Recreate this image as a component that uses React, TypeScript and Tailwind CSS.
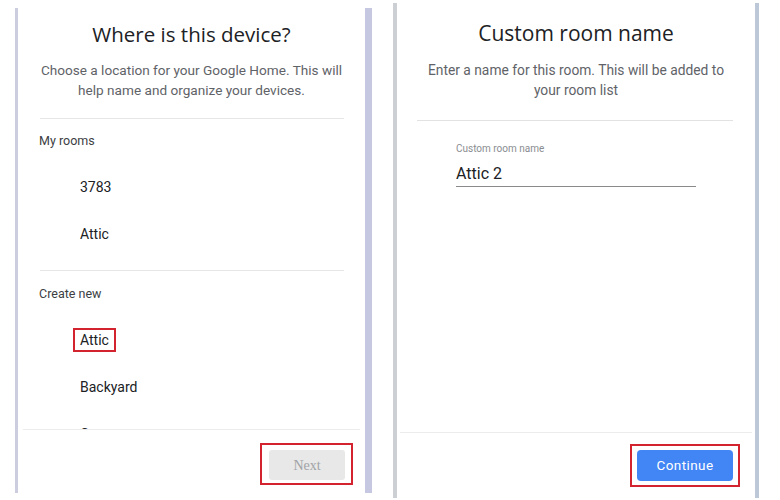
import React from "react";

const rooms = ["3783", "Attic"];
const suggestions = ["Attic", "Backyard", "Garage"];

function RoomRow({ label, marked }: { label: string; marked?: boolean }) {
  return (
    <div className="flex h-[47px] shrink-0 items-center pl-[62px]">
      {marked ? (
        <span className="ml-[-7px] inline-flex h-[24px] items-center border-2 border-[#d3232f] px-[5px] text-[14px] leading-[18px] text-[#202124]">
          {label}
        </span>
      ) : (
        <span className="text-[14px] leading-[18px] text-[#202124]">{label}</span>
      )}
    </div>
  );
}

function WherePanel() {
  return (
    <div className="ml-[15px] mt-[8px] flex h-[485px] w-[357px] shrink-0 flex-col border-l-[3px] border-r-[7px] border-l-[#cdcde0] border-r-[#c6c7e0] bg-white">
      <div className="flex min-h-0 flex-1 flex-col overflow-hidden">
        <h1 className="pt-[12px] text-center text-[20.5px] leading-[28px] font-normal text-[#202124] [font-family:'Open_Sans',Roboto,sans-serif]">
          Where is this device?
        </h1>
        <p className="mx-auto mt-[12px] w-[320px] text-center text-[13.6px] leading-[20px] text-[#5f6368]">
          Choose a location for your Google Home. This will help name and organize your devices.
        </p>
        <div className="ml-[22px] mr-[21px] mt-[18px] border-t border-[#e6e6e6]" />
        <div className="mt-[14px] pl-[21px] text-[12.5px] leading-[16px] text-[#3c4043]">My rooms</div>
        <div className="mt-[14px] flex flex-col">
          {rooms.map((r) => (
            <RoomRow key={r} label={r} />
          ))}
        </div>
        <div className="ml-[22px] mr-[21px] mt-[13px] border-t border-[#e6e6e6]" />
        <div className="mt-[15px] pl-[21px] text-[12.5px] leading-[16px] text-[#3c4043]">Create new</div>
        <div className="mt-[14px] flex flex-col">
          {suggestions.map((r, i) => (
            <RoomRow key={r} label={r} marked={i === 0} />
          ))}
        </div>
      </div>
      <div className="mx-[5px] h-[64px] shrink-0 border-t border-[#ececec]">
        <div className="flex justify-end pr-[7px] pt-[13px]">
          <div className="border-2 border-[#d3232f] pb-[3px] pl-[7px] pr-[6px] pt-[5px]">
            <button
              disabled
              className="h-[30px] w-[76px] rounded-[3px] bg-[#e8e8e8] text-[14px] text-[#a0a3a6] [font-family:'Liberation_Serif',serif]"
            >
              Next
            </button>
          </div>
        </div>
      </div>
    </div>
  );
}

function CustomPanel() {
  return (
    <div className="ml-[21px] mt-[3px] flex h-[495px] w-[366px] shrink-0 flex-col border-l-4 border-r-4 border-l-[#ccd0d5] border-r-[#bcc8d8] bg-white">
      <div className="flex flex-1 flex-col">
        <h1 className="pt-[16px] text-center text-[21px] leading-[28px] font-normal text-[#202124] [font-family:'Open_Sans',Roboto,sans-serif]">
          Custom room name
        </h1>
        <p className="mx-auto mt-[13px] w-[320px] text-center text-[13.8px] leading-[20px] text-[#5f6368]">
          Enter a name for this room. This will be added to your room list
        </p>
        <div className="ml-[20px] mr-[22px] mt-[20px] border-t border-[#e2e2e2]" />
        <label className="ml-[59px] mt-[22px] text-[10px] leading-[12px] text-[#8a8d91]">Custom room name</label>
        <div className="ml-[59px] mt-[9px] w-[240px] border-b border-[#8a8a8a] pb-[2px] text-[16px] leading-[20px] text-[#202124]">
          Attic 2
        </div>
      </div>
      <div className="mx-[3px] h-[66px] shrink-0 border-t border-[#ececec]">
        <div className="flex justify-end pr-[12px] pt-[11px]">
          <div className="border-2 border-[#d3232f] px-[5px] py-[4px]">
            <button className="h-[31px] w-[96px] rounded-[4px] bg-[#4285f4] text-[13.5px] tracking-[0.4px] text-white">
              Continue
            </button>
          </div>
        </div>
      </div>
    </div>
  );
}

export default function App() {
  return (
    <div className="flex h-[500px] w-[780px] items-start overflow-hidden bg-white [font-family:Roboto,'Liberation_Sans',sans-serif]">
      <WherePanel />
      <CustomPanel />
    </div>
  );
}
